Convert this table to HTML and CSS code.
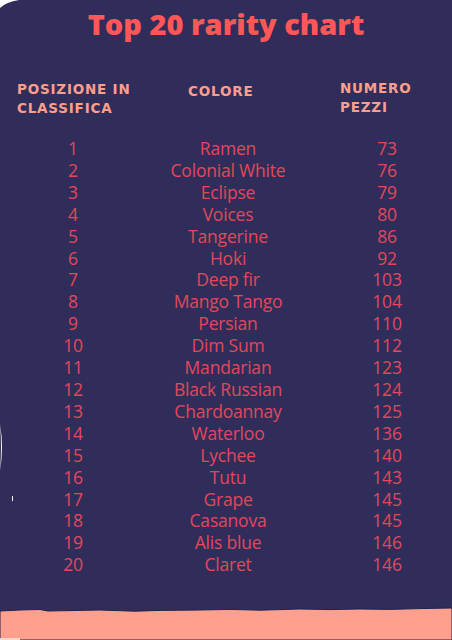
FILE: index.html
```html
<!DOCTYPE html>
<html lang="it">
<head>
<meta charset="utf-8">
<title>Top 20 rarity chart</title>
<link rel="stylesheet" href="styles.css">
</head>
<body>
<div class="page">
  <svg class="deco" width="452" height="640" viewBox="0 0 452 640" aria-hidden="true">
    <path d="M0 0 H19 Q6 2 0 8 Z" fill="#ffffff"/>
    <path d="M0 424 Q4 447 0 471 Q2 447 0 424 Z" fill="#ffffff"/>
    <path d="M12 496 L13 496 L13 501 L12 501 Z" fill="#ffffff"/>
  </svg>
  <h1 class="title">Top 20 rarity chart</h1>
  <div class="head">
    <div class="h h1c">POSIZIONE IN<br>CLASSIFICA</div>
    <div class="h h2c">COLORE</div>
    <div class="h h3c">NUMERO<br>PEZZI</div>
  </div>
  <div class="rows">
    <div class="row"><span>1</span><span>Ramen</span><span>73</span></div>
    <div class="row"><span>2</span><span>Colonial White</span><span>76</span></div>
    <div class="row"><span>3</span><span>Eclipse</span><span>79</span></div>
    <div class="row"><span>4</span><span>Voices</span><span>80</span></div>
    <div class="row"><span>5</span><span>Tangerine</span><span>86</span></div>
    <div class="row"><span>6</span><span>Hoki</span><span>92</span></div>
    <div class="row"><span>7</span><span>Deep fir</span><span>103</span></div>
    <div class="row"><span>8</span><span>Mango Tango</span><span>104</span></div>
    <div class="row"><span>9</span><span>Persian</span><span>110</span></div>
    <div class="row"><span>10</span><span>Dim Sum</span><span>112</span></div>
    <div class="row"><span>11</span><span>Mandarian</span><span>123</span></div>
    <div class="row"><span>12</span><span>Black Russian</span><span>124</span></div>
    <div class="row"><span>13</span><span>Chardoannay</span><span>125</span></div>
    <div class="row"><span>14</span><span>Waterloo</span><span>136</span></div>
    <div class="row"><span>15</span><span>Lychee</span><span>140</span></div>
    <div class="row"><span>16</span><span>Tutu</span><span>143</span></div>
    <div class="row"><span>17</span><span>Grape</span><span>145</span></div>
    <div class="row"><span>18</span><span>Casanova</span><span>145</span></div>
    <div class="row"><span>19</span><span>Alis blue</span><span>146</span></div>
    <div class="row"><span>20</span><span>Claret</span><span>146</span></div>
  </div>
  <svg class="band" width="452" height="34" viewBox="0 0 452 34" preserveAspectRatio="none" aria-hidden="true">
    <path d="M0 5 L20 4 L40 3.5 L48 5 L70 4.6 L100 4 L135 5.2 L160 4.4 L200 4 L230 3.4 L260 4.2 L300 3 L330 3.6 L360 3 L390 3.4 L420 2.6 L452 2 L452 34 L0 34 Z" fill="#ff9f8d" stroke="#1f2150" stroke-width="1"/>
    <rect x="0" y="32" width="20" height="2" fill="#fbd6cc"/>
  </svg>
</div>
</body>
</html>
```

FILE: styles.css
```css
* { box-sizing: border-box; }
html, body {
  margin: 0;
  padding: 0;
  background: #302d5a;
}
.page {
  position: relative;
  width: 452px;
  height: 640px;
  overflow: hidden;
  background: #302d5a;
  display: flex;
  flex-direction: column;
}
.deco {
  position: absolute;
  left: 0;
  top: 0;
  pointer-events: none;
}
.title {
  margin: 0;
  padding-top: 5px;
  font-family: "Open Sans", sans-serif;
  font-weight: 800;
  font-size: 29px;
  line-height: 38px;
  color: #ff5757;
  text-align: center;
}
.head {
  margin-top: 37px;
  display: grid;
  grid-template-columns: 171px 152px 1fr;
  padding-left: 17px;
  font-family: "DejaVu Sans", sans-serif;
  font-weight: 700;
  font-size: 13.5px;
  line-height: 19px;
  letter-spacing: 0.8px;
  color: #ff9e8c;
}
.h2c { padding-top: 2px; }
.h3c { margin-top: -1px; }
.rows {
  margin-top: 20px;
  display: flex;
  flex-direction: column;
  padding: 0 8px 0 20px;
}
.row {
  display: grid;
  grid-template-columns: 106px 204px 114px;
  font-family: "Open Sans", sans-serif;
  font-weight: 400;
  font-size: 17.5px;
  letter-spacing: -0.2px;
  line-height: 21.9px;
  color: #e2475a;
  text-align: center;
}
.band {
  display: block;
  margin-top: auto;
}
```
